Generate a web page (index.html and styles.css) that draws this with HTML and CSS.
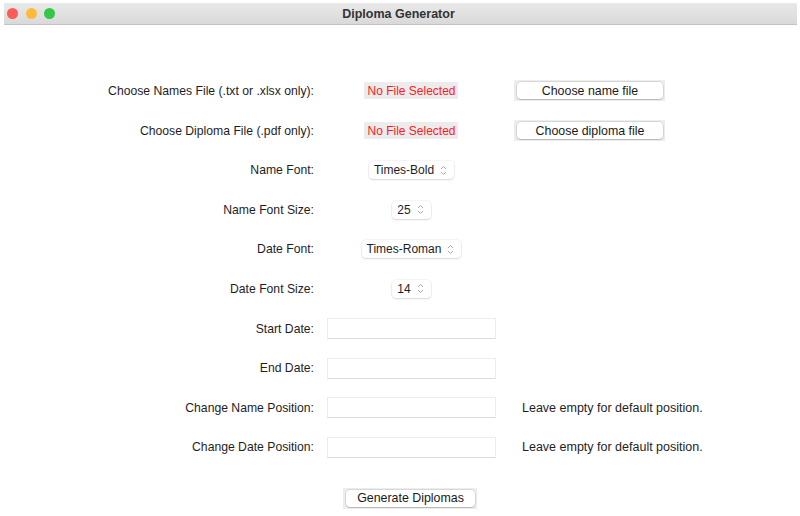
FILE: index.html
```html
<!DOCTYPE html>
<html>
<head>
<meta charset="utf-8">
<link rel="stylesheet" href="styles.css">
</head>
<body>
<div class="window">
  <div class="titlebar">
    <div class="lights">
      <span class="light red"></span>
      <span class="light yellow"></span>
      <span class="light green"></span>
    </div>
    <div class="title">Diploma Generator</div>
  </div>
  <div class="form">
    <div class="label">Choose Names File (.txt or .xlsx only):</div>
    <div class="cell"><span class="status">No File Selected</span></div>
    <div class="cell side"><span class="btn-frame wide"><span class="btn">Choose name file</span></span></div>

    <div class="label">Choose Diploma File (.pdf only):</div>
    <div class="cell"><span class="status">No File Selected</span></div>
    <div class="cell side"><span class="btn-frame wide"><span class="btn">Choose diploma file</span></span></div>

    <div class="label">Name Font:</div>
    <div class="cell"><span class="popup">Times-Bold<svg class="chev" width="7" height="11" viewBox="0 0 7 11"><path d="M1 4 L3.5 1.5 L6 4 M1 7 L3.5 9.5 L6 7"/></svg></span></div>
    <div class="cell side"></div>

    <div class="label">Name Font Size:</div>
    <div class="cell"><span class="popup">25<svg class="chev" width="7" height="11" viewBox="0 0 7 11"><path d="M1 4 L3.5 1.5 L6 4 M1 7 L3.5 9.5 L6 7"/></svg></span></div>
    <div class="cell side"></div>

    <div class="label">Date Font:</div>
    <div class="cell"><span class="popup">Times-Roman<svg class="chev" width="7" height="11" viewBox="0 0 7 11"><path d="M1 4 L3.5 1.5 L6 4 M1 7 L3.5 9.5 L6 7"/></svg></span></div>
    <div class="cell side"></div>

    <div class="label">Date Font Size:</div>
    <div class="cell"><span class="popup">14<svg class="chev" width="7" height="11" viewBox="0 0 7 11"><path d="M1 4 L3.5 1.5 L6 4 M1 7 L3.5 9.5 L6 7"/></svg></span></div>
    <div class="cell side"></div>

    <div class="label">Start Date:</div>
    <div class="cell"><span class="field"></span></div>
    <div class="cell side"></div>

    <div class="label">End Date:</div>
    <div class="cell"><span class="field"></span></div>
    <div class="cell side"></div>

    <div class="label">Change Name Position:</div>
    <div class="cell"><span class="field"></span></div>
    <div class="cell side"><span class="hint">Leave empty for default position.</span></div>

    <div class="label">Change Date Position:</div>
    <div class="cell"><span class="field"></span></div>
    <div class="cell side"><span class="hint">Leave empty for default position.</span></div>

    <div class="label"></div>
    <div class="cell generate"><span class="btn-frame"><span class="btn gen">Generate Diplomas</span></span></div>
    <div class="cell side"></div>
  </div>
</div>
</body>
</html>
```
FILE: styles.css
```css
html, body {
  margin: 0;
  padding: 0;
  background: #ffffff;
  width: 800px;
  height: 516px;
  overflow: hidden;
  font-family: "Liberation Sans", Arial, sans-serif;
  font-size: 12px;
  color: #1e1e1e;
}

.window {
  padding-top: 3px;
}

.titlebar {
  margin: 0 3px 0 4px;
  height: 21px;
  background: linear-gradient(#e9e9e9, #d9d9d9);
  border-bottom: 1px solid #c3c3c3;
  display: flex;
  align-items: center;
  position: relative;
}

.lights {
  display: flex;
  gap: 7.5px;
  padding-left: 3px;
}

.light {
  width: 11px;
  height: 11px;
  border-radius: 50%;
  display: block;
}

.red { background: #fc5b57; }
.yellow { background: #fdbb3c; }
.green { background: #33c748; }

.title {
  position: absolute;
  left: 0;
  right: 0;
  text-align: center;
  font-weight: bold;
  font-size: 12.5px;
  color: #333333;
  padding-right: 4px;
}

.form {
  display: grid;
  grid-template-columns: 314px 194px 1fr;
  grid-template-rows: repeat(10, 39.6px) 22px;
  padding-top: 46.2px;
}

.label {
  display: flex;
  align-items: center;
  justify-content: flex-end;
  white-space: nowrap;
  font-size: 12.2px;
}

.cell {
  display: flex;
  align-items: center;
  justify-content: center;
}

.cell.side {
  justify-content: flex-start;
  padding-left: 6px;
}

.generate {
  margin-top: 20px;
  height: 22px;
  justify-content: center;
  margin-left: -2px;
}

.form > .label:nth-last-child(3),
.form > .cell.side:last-child {
  margin-top: 20px;
}

.status {
  display: inline-block;
  background: #ececec;
  color: #ff1a1a;
  height: 17px;
  line-height: 18px;
  padding: 0 2px 0 3px;
  white-space: nowrap;
}

.btn-frame {
  display: inline-flex;
  background: #ededed;
  padding: 2px 2px 2px 3px;
  height: 17px;
}

.btn-frame.wide {
  width: 146px;
}

.btn {
  flex: 1;
  display: flex;
  align-items: center;
  justify-content: center;
  background: #ffffff;
  border-radius: 4px;
  box-shadow: 0 0 0 0.5px rgba(0, 0, 0, 0.18), 0 1px 1px rgba(0, 0, 0, 0.14);
  white-space: nowrap;
  color: #1a1a1a;
  font-size: 12.4px;
}

.btn.gen {
  padding: 0 11px;
  width: 107px;
}

.popup {
  display: inline-flex;
  align-items: center;
  gap: 6px;
  height: 18px;
  padding: 0 7px 0 5px;
  background: #ffffff;
  border-radius: 4px;
  box-shadow: 0 0 0 0.5px rgba(0, 0, 0, 0.08), 0 1px 2px rgba(0, 0, 0, 0.12);
  white-space: nowrap;
  margin-left: 1px;
}

.chev path {
  fill: none;
  stroke: #a8a8a8;
  stroke-width: 1;
}

.field {
  display: block;
  width: 167px;
  height: 19px;
  background: #ffffff;
  border: 1px solid #ececec;
  border-bottom-color: #dcdcdc;
  margin-left: 1px;
}

.hint {
  padding-left: 8px;
  white-space: nowrap;
  font-size: 12.5px;
}
```
